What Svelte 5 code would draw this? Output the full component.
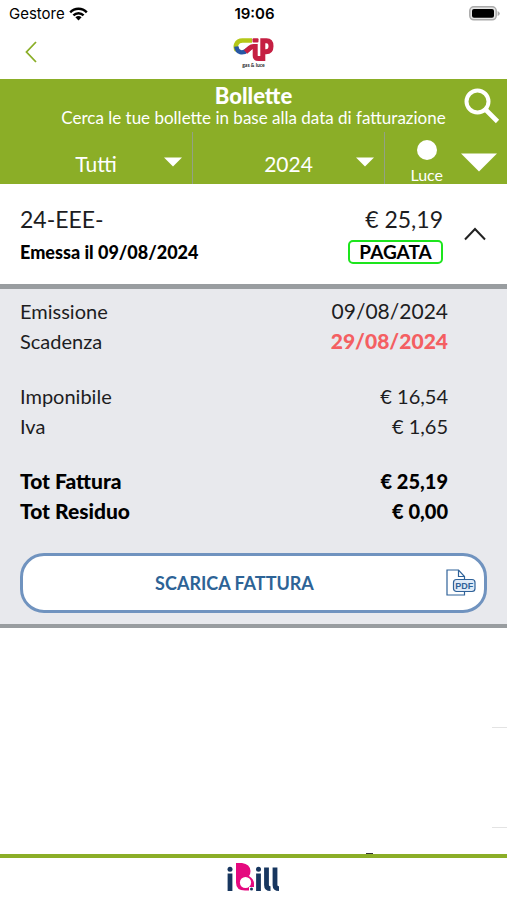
<script lang="ts">
  let filter = $state("Tutti");
  let year = $state("2024");
  let open = $state(true);

  const groups = [
    [
      { label: "Emissione", value: "09/08/2024", kind: "date" },
      { label: "Scadenza", value: "29/08/2024", kind: "date due" },
    ],
    [
      { label: "Imponibile", value: "€ 16,54" },
      { label: "Iva", value: "€ 1,65" },
    ],
    [
      { label: "Tot Fattura", value: "€ 25,19", kind: "total" },
      { label: "Tot Residuo", value: "€ 0,00", kind: "total" },
    ],
  ];
</script>

{#snippet caret()}
  <svg class="caret" viewBox="0 0 18 10" aria-hidden="true">
    <path d="M0 0.5h18L9 9.5z" fill="#fff" />
  </svg>
{/snippet}

<div class="app">
  <div class="status">
    <span class="carrier">
      Gestore
      <svg width="19" height="14" viewBox="0 0 19 14" aria-hidden="true">
        <g fill="none" stroke="#000" stroke-width="2.4">
          <path d="M1.2 5.3C5.8 .5 13.2 .5 17.8 5.3" />
          <path d="M4.4 8.4C7.3 5.5 11.7 5.5 14.6 8.4" />
        </g>
        <path d="M6.4 10.3Q9.5 7.9 12.6 10.3L9.5 13.6z" />
      </svg>
    </span>
    <span class="clock">19:06</span>
    <svg class="battery" width="31" height="15" viewBox="0 0 31 15" aria-hidden="true">
      <rect x="0.8" y="0.8" width="26.4" height="13" rx="4" fill="#e6e6e6" stroke="#aaa" stroke-width="1.5" />
      <rect x="3" y="3" width="22" height="8.8" rx="2" />
      <path d="M28.6 5v5q2.2-1 2.2-2.5T28.6 5z" fill="#aaa" />
    </svg>
  </div>

  <header>
    <button class="back" aria-label="Indietro">
      <svg width="12" height="22" viewBox="0 0 12 22" aria-hidden="true">
        <path d="M11 1L1.5 11L11 21" fill="none" stroke="#8aae27" stroke-width="1.8" />
      </svg>
    </button>
    <div class="brand">
      <svg width="42" height="25" viewBox="0 0 42 25" role="img" aria-label="CIP">
        <g fill="none">
          <path d="M4 13.5C1.5 10 3 3.5 9.5 3.5H19" stroke="#b4c718" stroke-width="4.6" />
          <path d="M3.3 9.5C4 15.5 9.5 17.5 15 12.5L17.5 10.5" stroke="#2857a4" stroke-width="4.4" />
          <path d="M12.5 14.8L17 10.8Q18.5 9.500 20.5 9.500H22.200V18.5Q22.200 21.5 25.5 21.5H29.8V3.8H33.5Q38 3.8 38 9.2T33 14.8H30" stroke="#c51f42" stroke-width="5" />
        </g>
        <rect x="19.5" y="1.3" width="6" height="4.2" rx="1" fill="#c51f42" />
      </svg>
      <small>gas &amp; luce</small>
    </div>
  </header>

  <section class="search">
    <div class="intro">
      <h1>Bollette</h1>
      <p>Cerca le tue bollette in base alla data di fatturazione</p>
      <button class="lens" aria-label="Cerca">
        <svg width="36" height="36" viewBox="0 0 36 36" aria-hidden="true">
          <g fill="none" stroke="#fff">
            <circle cx="13.5" cy="13.5" r="11" stroke-width="4" />
            <path d="M21.5 21.5L33.5 33.5" stroke-width="4.6" />
          </g>
        </svg>
      </button>
    </div>
    <div class="filters">
      <div class="filter">
        <select bind:value={filter} aria-label="Stato">
          <option>Tutti</option>
          <option>Pagate</option>
          <option>Non pagate</option>
        </select>
        {@render caret()}
      </div>
      <div class="filter">
        <select bind:value={year} aria-label="Anno">
          <option>2024</option>
          <option>2023</option>
        </select>
        {@render caret()}
      </div>
      <button class="supply">
        <span class="kind"><i></i>Luce</span>
        <svg width="36" height="19" viewBox="0 0 36 19" aria-hidden="true">
          <path d="M0 0.5h36L18 18.5z" fill="#fff" />
        </svg>
      </button>
    </div>
  </section>

  <main>
    <article>
      <button class="bill" aria-expanded={open} onclick={() => (open = !open)}>
        <span class="left">
          <span class="number">24-EEE-</span>
          <strong>Emessa il 09/08/2024</strong>
        </span>
        <span class="right">
          <span class="number">€ 25,19</span>
          <span class="badge">PAGATA</span>
        </span>
        <svg class:closed={!open} width="22" height="14" viewBox="0 0 22 14" aria-hidden="true">
          <path d="M1 12.5L11 2L21 12.5" fill="none" stroke="#222" stroke-width="2" />
        </svg>
      </button>
      {#if open}
        <div class="details">
          {#each groups as rows}
            <dl>
              {#each rows as row}
                <div class={row.kind}>
                  <dt>{row.label}</dt>
                  <dd>{row.value}</dd>
                </div>
              {/each}
            </dl>
          {/each}
          <button class="download">
            <span>SCARICA FATTURA</span>
            <svg width="30" height="28" viewBox="0 0 30 28" aria-hidden="true">
              <g fill="none" stroke="#2f6299" stroke-width="1.2">
                <path d="M18.5 22V26H1V1H12.5L18.5 7.5V10" />
                <path d="M12.5 1V7.5H18.5" />
                <rect x="7.5" y="10.5" width="21.5" height="12" rx="3" fill="#dfeaf7" />
              </g>
              <text x="18.2" y="19.8" text-anchor="middle">PDF</text>
            </svg>
          </button>
        </div>
      {/if}
    </article>
    <div class="slot"></div>
    <div class="slot"></div>
    <span class="peek"></span>
  </main>

  <footer>
    <svg width="54" height="30" viewBox="0 0 54 30" role="img" aria-label="iBill">
      <g fill="none" stroke="#17365f" stroke-width="4.8">
        <path d="M3 10.5V28" />
        <path d="M31.5 10.5V28" />
        <path d="M39.5 4.5V22Q39.5 25.6 43.5 25.6" />
        <path d="M48 4.5V22Q48 25.6 52 25.6" />
      </g>
      <circle cx="3" cy="6.2" r="2.5" fill="#17365f" />
      <circle cx="31.5" cy="6.2" r="2.5" fill="#17365f" />
      <path d="M9 0H15Q23 1 23.5 8Q23.5 11 22 13Q27 16 27 21V24H22V27.5H18Q9 27.5 9 19.5z" fill="#e5097f" />
      <circle cx="18.5" cy="19.5" r="5.6" fill="#fff" />
      <circle cx="24.5" cy="26" r="1.5" fill="#17365f" />
    </svg>
  </footer>
</div>

<style>
  :global(body) {
    margin: 0;
    background: #fff;
  }
  .app {
    display: flex;
    flex-direction: column;
    height: 100vh;
    font-family: Lato, "Open Sans", sans-serif;
    color: #1d1d1f;
  }
  button,
  select {
    margin: 0;
    padding: 0;
    border: 0;
    background: none;
    font: inherit;
    color: inherit;
    cursor: pointer;
  }
  svg {
    display: block;
    flex: none;
  }
  .status {
    display: grid;
    grid-template-columns: 1fr auto 1fr;
    align-items: center;
    height: 27px;
    padding: 0 7px 0 9px;
    font-family: Inter, sans-serif;
    font-size: 15px;
    color: #000;
  }
  .carrier {
    display: flex;
    align-items: center;
    gap: 4px;
  }
  .clock {
    font-weight: 600;
  }
  .battery {
    justify-self: end;
  }
  header {
    display: grid;
    grid-template-columns: 1fr auto 1fr;
    align-items: center;
    height: 50px;
    padding-bottom: 2px;
  }
  .back {
    justify-self: start;
    padding: 8px 25px;
  }
  .brand {
    display: flex;
    flex-direction: column;
    align-items: center;
  }
  .brand small {
    font-size: 5px;
    line-height: 6px;
    font-weight: 700;
  }
  .search {
    background: #8bae27;
    color: #fff;
  }
  .intro {
    position: relative;
    height: 53px;
    text-align: center;
  }
  h1 {
    margin: 0;
    padding-top: 5px;
    font-size: 22px;
    line-height: 24px;
    font-weight: 900;
  }
  .intro p {
    margin: 0;
    font-size: 17px;
    line-height: 20px;
  }
  .lens {
    position: absolute;
    top: 9px;
    right: 7px;
  }
  .filters {
    display: grid;
    grid-template-columns: 193fr 192fr 122fr;
    height: 52px;
  }
  .filter {
    position: relative;
    border-right: 1px solid #93a284;
  }
  select {
    appearance: none;
    width: 100%;
    height: 100%;
    padding-top: 10px;
    font-size: 21px;
    text-align: center;
    text-align-last: center;
  }
  option {
    color: #1d1d1f;
  }
  .caret {
    position: absolute;
    right: 10px;
    top: 25px;
    width: 18px;
    height: 10px;
    pointer-events: none;
  }
  .supply {
    display: flex;
    align-items: center;
    justify-content: flex-end;
    gap: 18px;
    padding: 8px 10px 0 0;
  }
  .kind {
    display: flex;
    flex-direction: column;
    align-items: center;
    gap: 6px;
    font-size: 16px;
    line-height: 18px;
  }
  .kind i {
    width: 20px;
    height: 20px;
    border-radius: 50%;
    background: #fff;
  }
  main {
    flex: 1;
    min-height: 0;
    overflow: hidden;
    position: relative;
  }
  .bill {
    display: flex;
    align-items: center;
    width: 100%;
    height: 100px;
    padding: 0 21px 0 20px;
    text-align: left;
  }
  .left,
  .right {
    display: flex;
    flex-direction: column;
    gap: 7px;
  }
  .left {
    flex: 1;
  }
  .right {
    align-items: flex-end;
    margin-right: 21px;
  }
  .number {
    font-size: 23px;
    line-height: 28px;
  }
  .bill strong {
    font-size: 18px;
    line-height: 24px;
    font-weight: 900;
    color: #000;
  }
  .badge {
    box-sizing: border-box;
    width: 95px;
    border: 2px solid #1de51d;
    border-radius: 5px;
    font-size: 19px;
    line-height: 20px;
    font-weight: 700;
    text-align: center;
    color: #000;
  }
  .closed {
    transform: rotate(180deg);
  }
  .details {
    padding: 7px 20px 11px;
    border-top: 5px solid #999da0;
    border-bottom: 4px solid #999da0;
    background: #e8e9ed;
  }
  dl {
    margin: 0 39px 25px 0;
  }
  dl div {
    display: flex;
    justify-content: space-between;
    font-size: 20px;
    line-height: 30px;
  }
  dd {
    margin: 0;
  }
  .date dd {
    font-size: 21px;
  }
  .due dd {
    color: #f45f62;
    font-weight: 900;
  }
  dl .total {
    font-size: 21px;
    font-weight: 900;
    color: #000;
  }
  .total dd {
    font-size: 20px;
  }
  .download {
    display: flex;
    align-items: center;
    box-sizing: border-box;
    width: 100%;
    height: 60px;
    margin-top: 27px;
    padding-right: 8px;
    border: 3px solid #7093bf;
    border-radius: 24px;
    background: #fff;
    color: #2d6396;
  }
  .download span {
    flex: 1;
    font-size: 18px;
    font-weight: 700;
  }
  .download text {
    font: 700 9px "Liberation Sans", sans-serif;
    fill: #2f6299;
  }
  .slot {
    height: 99px;
    margin-left: auto;
    width: 15px;
    border-bottom: 1px solid #e3e3e3;
  }
  .peek {
    position: absolute;
    right: 134px;
    bottom: 0;
    width: 7px;
    height: 1px;
    background: #333;
  }
  footer {
    display: flex;
    justify-content: center;
    align-items: flex-start;
    height: 37px;
    padding-top: 5px;
    border-top: 4px solid #8bae27;
  }
</style>
